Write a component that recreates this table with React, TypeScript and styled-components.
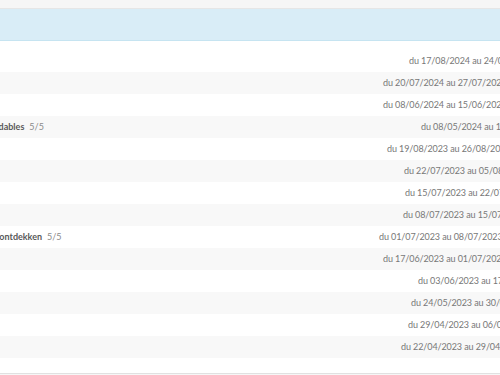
import React from "react";
import styled, { createGlobalStyle } from "styled-components";

const Global = createGlobalStyle`
  html, body {
    margin: 0;
    padding: 0;
    background: #f6f6f6;
    overflow: hidden;
  }
  body {
    font-family: Lato, "Open Sans", "Noto Sans", sans-serif;
  }
`;

const Page = styled.div`
  width: 500px;
  height: 375px;
  overflow: hidden;
  background: #f6f6f6;
  padding-top: 8px;
  box-sizing: border-box;
`;

const Scroller = styled.div`
  border-top: 1px solid #e6e6e6;
  border-bottom: 1px solid #e1e1e1;
  overflow: hidden;
  background: #fff;
`;

const Table = styled.div`
  width: 820px;
  margin-left: -200px;
  display: flex;
  flex-direction: column;
`;

const HeaderRow = styled.div`
  height: 31px;
  background: #d9edf7;
  border-bottom: 1px solid #c6e4f1;
`;

const Row = styled.div<{ $striped: boolean; $first?: boolean; $height?: number }>`
  display: grid;
  grid-template-columns: 570px 1fr;
  align-items: center;
  height: ${(p) => p.$height ?? 22}px;
  box-sizing: border-box;
  padding-top: ${(p) => (p.$first ? 9 : 0)}px;
  background: ${(p) => (p.$striped ? "#f8f8f8" : "#ffffff")};
  font-size: 9px;
  line-height: 12px;
`;

const NameCell = styled.div`
  display: flex;
  align-items: baseline;
  gap: 5px;
  padding-left: 10px;
  white-space: nowrap;
  overflow: hidden;
`;

const Title = styled.span`
  font-weight: 700;
  color: #595959;
`;

const Count = styled.span`
  color: #8a8a8a;
`;

const DateCell = styled.div<{ $indent: number }>`
  padding-left: ${(p) => p.$indent}px;
  color: #777;
  letter-spacing: -0.1px;
  white-space: nowrap;
  overflow: hidden;
`;

type Item = { title?: string; count?: string; dates?: string; indent: number };

const items: Item[] = [
  { dates: "du 17/08/2024 au 24/08/2024", indent: 39 },
  { dates: "du 20/07/2024 au 27/07/2024", indent: 13 },
  { dates: "du 08/06/2024 au 15/06/2024", indent: 13 },
  {
    title: "Une escapade en Normandie, les vacances abordables",
    count: "5/5",
    dates: "du 08/05/2024 au 11/05/2024",
    indent: 51,
  },
  { dates: "du 19/08/2023 au 26/08/2023", indent: 17 },
  { dates: "du 22/07/2023 au 05/08/2023", indent: 34 },
  { dates: "du 15/07/2023 au 22/07/2023", indent: 35 },
  { dates: "du 08/07/2023 au 15/07/2023", indent: 33 },
  {
    title: "Met het hele gezin samen de zonnige Provence ontdekken",
    count: "5/5",
    dates: "du 01/07/2023 au 08/07/2023",
    indent: 9,
  },
  { dates: "du 17/06/2023 au 01/07/2023", indent: 13 },
  { dates: "du 03/06/2023 au 17/06/2023", indent: 48 },
  { dates: "du 24/05/2023 au 30/05/2023", indent: 41 },
  { dates: "du 29/04/2023 au 06/05/2023", indent: 38 },
  { dates: "du 22/04/2023 au 29/04/2023", indent: 31 },
];

export default function App() {
  return (
    <>
      <Global />
      <Page>
        <Scroller>
          <Table>
            <HeaderRow />
            {items.map((it, i) => (
              <Row key={i} $striped={i % 2 === 1} $first={i === 0} $height={i === 0 ? 31 : 22}>
                <NameCell>
                  {it.title && <Title>{it.title}</Title>}
                  {it.count && <Count>{it.count}</Count>}
                </NameCell>
                <DateCell $indent={it.indent}>{it.dates}</DateCell>
              </Row>
            ))}
            <Row $striped={false} $height={15}>
              <NameCell />
              <DateCell $indent={0} />
            </Row>
          </Table>
        </Scroller>
      </Page>
    </>
  );
}
